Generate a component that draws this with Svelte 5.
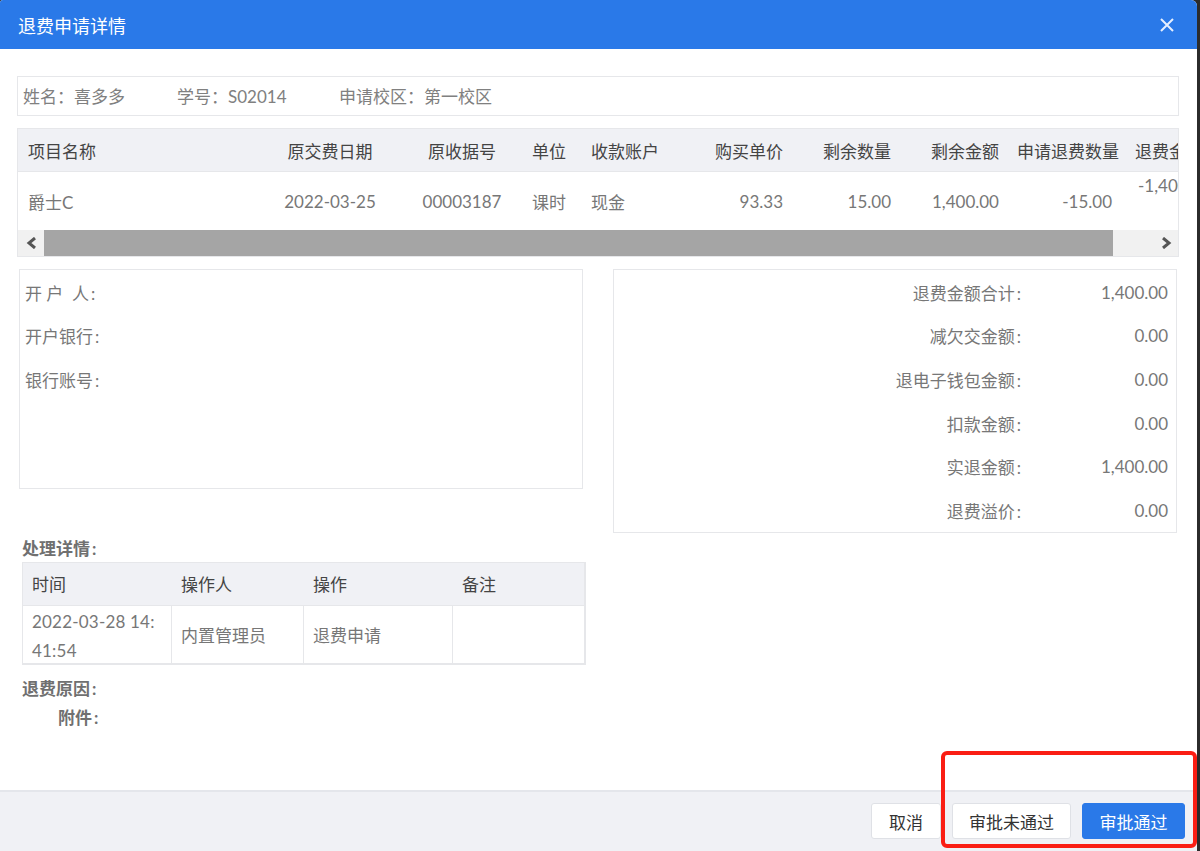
<script>
  const columns = [
    { key: 'name', label: '项目名称', width: 242, align: 'left' },
    { key: 'date', label: '原交费日期', width: 140, align: 'center' },
    { key: 'receipt', label: '原收据号', width: 124, align: 'center' },
    { key: 'unit', label: '单位', width: 59, align: 'left' },
    { key: 'account', label: '收款账户', width: 100, align: 'left' },
    { key: 'price', label: '购买单价', width: 108, align: 'right' },
    { key: 'qty', label: '剩余数量', width: 108, align: 'right' },
    { key: 'amount', label: '剩余金额', width: 108, align: 'right' },
    { key: 'refundQty', label: '申请退费数量', width: 120, align: 'right' },
    { key: 'refund', label: '退费金额', width: 120, align: 'left' }
  ];

  const row = {
    name: '爵士C',
    date: '2022-03-25',
    receipt: '00003187',
    unit: '课时',
    account: '现金',
    price: '93.33',
    qty: '15.00',
    amount: '1,400.00',
    refundQty: '-15.00',
    refund: '-1,400.00'
  };

  const bankFields = ['开 户  人', '开户银行', '银行账号'];

  const totals = [
    ['退费金额合计', '1,400.00'],
    ['减欠交金额', '0.00'],
    ['退电子钱包金额', '0.00'],
    ['扣款金额', '0.00'],
    ['实退金额', '1,400.00'],
    ['退费溢价', '0.00']
  ];

  const logHead = [
    { label: '时间', width: 149 },
    { label: '操作人', width: 132 },
    { label: '操作', width: 149 },
    { label: '备注', width: 132 }
  ];
</script>

<div class="dialog">
  <header class="title-bar">
    <span>退费申请详情</span>
    <svg class="close" width="14" height="14" viewBox="0 0 14 14" aria-hidden="true">
      <path d="M1 1 L13 13 M13 1 L1 13" stroke="#e6efff" stroke-width="2" fill="none" />
    </svg>
  </header>

  <main class="content">
    <div class="student">
      <span class="s-name">姓名：喜多多</span>
      <span class="s-no">学号：S02014</span>
      <span>申请校区：第一校区</span>
    </div>

    <div class="grid">
      <div class="grid-clip">
        <div class="grid-row head">
          {#each columns as col}
            <div class="cell {col.align}" style="width: {col.width}px">{col.label}</div>
          {/each}
        </div>
        <div class="grid-row body">
          {#each columns as col}
            <div
              class="cell {col.align}"
              class:raised={col.key === 'refund'}
              class:indent={col.key === 'refundQty'}
              style="width: {col.width}px"
            >{row[col.key]}</div>
          {/each}
        </div>
      </div>
      <div class="scrollbar">
        <div class="arrow">
          <svg width="11" height="12" viewBox="0 0 11 12"><path d="M9 1 L3 6 L9 11" stroke="#555" stroke-width="3" fill="none" /></svg>
        </div>
        <div class="thumb"></div>
        <div class="arrow end">
          <svg width="11" height="12" viewBox="0 0 11 12"><path d="M2 1 L8 6 L2 11" stroke="#555" stroke-width="3" fill="none" /></svg>
        </div>
      </div>
    </div>

    <div class="columns">
      <div class="left-col">
        <div class="bank">
          {#each bankFields as field}
            <div class="bank-row"><span>{field}<span class="colon">:</span></span></div>
          {/each}
        </div>

        <div class="section-label">处理详情<span class="colon">:</span></div>
        <div class="log">
          <div class="log-row log-head">
            {#each logHead as h}
              <div class="log-cell" style="width: {h.width}px">{h.label}</div>
            {/each}
          </div>
          <div class="log-row log-body">
            <div class="log-cell stamp" style="width: 148px">2022-03-28 14:<br />41:54</div>
            <div class="log-cell" style="width: 132px">内置管理员</div>
            <div class="log-cell" style="width: 149px">退费申请</div>
            <div class="log-cell" style="width: 132px"></div>
          </div>
        </div>

        <div class="section-label reason">退费原因<span class="colon">:</span></div>
        <div class="section-label attach">附件<span class="colon">:</span></div>
      </div>

      <div class="totals">
        {#each totals as [label, value]}
          <div class="total-row">
            <span>{label}<span class="colon">:</span></span>
            <span class="total-value">{value}</span>
          </div>
        {/each}
      </div>
    </div>
  </main>

  <footer class="actions">
    <button class="cancel">取消</button>
    <button class="reject">审批未通过</button>
    <button class="primary">审批通过</button>
  </footer>

  <div class="highlight"></div>
</div>

<style>
  :global(*, *::before, *::after) { box-sizing: border-box; }

  :global(body) {
    background: #2b2b2b;
    font-family: "Lato", "Noto Sans CJK SC", sans-serif;
    font-size: 17px;
    color: #777;
  }

  .dialog {
    position: relative;
    width: 1197px;
    height: 851px;
    background: #fff;
    border-radius: 3px 6px 0 0;
    display: flex;
    flex-direction: column;
    overflow: hidden;
  }

  .title-bar {
    flex: none;
    height: 49px;
    background: #2a79e8;
    color: #fff;
    font-size: 18px;
    padding: 0 23px 0 18px;
    display: flex;
    align-items: center;
    justify-content: space-between;
  }

  .content {
    flex: 1;
    padding: 27px 18px 0 17px;
    min-height: 0;
  }

  .student {
    height: 40px;
    border: 1px solid #e6e7ea;
    display: flex;
    align-items: center;
    padding: 0 0 1px 5px;
    color: #808080;
  }

  .s-name { width: 154px; }
  .s-no { width: 162px; }

  .grid {
    margin-top: 12px;
    height: 129px;
    border: 1px solid #e6e7ea;
    display: flex;
    flex-direction: column;
  }

  .grid-clip { flex: 1; overflow: hidden; min-height: 0; }

  .grid-row { display: flex; width: max-content; }

  .head {
    height: 43px;
    background: #f0f1f5;
    border-bottom: 1px solid #e6e7ea;
    color: #444;
  }

  .body { height: 58px; color: #777; }

  .cell {
    flex: none;
    padding: 0 8px;
    display: flex;
    align-items: center;
    white-space: nowrap;
  }

  .cell:first-child { padding-left: 10px; }
  .cell.center { justify-content: center; }
  .cell.right { justify-content: flex-end; }
  .cell.indent { padding-right: 15px; }
  .cell.raised { align-items: flex-start; padding-top: 3px; padding-left: 11px; }

  .scrollbar {
    flex: none;
    height: 26px;
    background: #f1f1f1;
    display: flex;
  }

  .arrow {
    width: 26px;
    display: flex;
    align-items: center;
    justify-content: center;
  }

  .arrow.end { width: 65px; padding-left: 41px; }

  .thumb { flex: 1; background: #a5a5a5; }

  .columns {
    margin-top: 12px;
    margin-right: 2px;
    display: flex;
    justify-content: space-between;
    align-items: flex-start;
  }

  .left-col { width: 569px; }

  .bank {
    width: 564px;
    height: 220px;
    margin-left: 2px;
    border: 1px solid #e6e7ea;
    padding: 0.5px 5px 0;
  }

  .bank-row {
    height: 43.5px;
    display: flex;
    align-items: center;
    white-space: pre;
  }

  /* the trailing colon sits a little wider than the text font's own */
  .colon { margin-left: 2px; }

  .section-label {
    font-weight: 700;
    color: #707070;
    line-height: 22px;
    padding-left: 5px;
  }

  .bank + .section-label { margin-top: 49px; }

  .log {
    margin: 2px 0 0 5px;
    width: 564px;
    border: 1px solid #e6e7ea;
    border-bottom-width: 2px;
    border-right-width: 2px;
  }

  .log-row { display: flex; }

  .log-head {
    height: 42px;
    background: #f0f1f5;
    color: #444;
  }

  .log-body { height: 58px; color: #777; border-top: 1px solid #e6e7ea; }

  .log-cell {
    flex: none;
    padding: 1px 9px 0;
    display: flex;
    align-items: center;
    line-height: 29px;
  }

  .log-body .stamp { display: block; letter-spacing: 0.2px; }
  .log-body .log-cell + .log-cell { border-left: 1px solid #e6e7ea; }

  .reason { margin-top: 13px; }
  .attach { margin-top: 7px; padding-left: 41px; }

  .totals {
    width: 564px;
    height: 264px;
    border: 1px solid #e6e7ea;
    padding: 0.5px 8px 0 0;
  }

  .total-row {
    height: 43.6px;
    display: flex;
    align-items: center;
    justify-content: flex-end;
  }

  .total-value { width: 147px; text-align: right; }

  .actions {
    flex: none;
    height: 61px;
    background: #f0f1f5;
    border-top: 2px solid #e4e6eb;
    display: flex;
    justify-content: flex-end;
    align-items: flex-start;
    gap: 11px;
    padding: 11px 12px 0 0;
  }

  button {
    height: 36px;
    padding: 0;
    background: #fff;
    border: 1px solid #dfe1e6;
    border-radius: 3px;
    font: inherit;
    color: #333;
  }

  .cancel { width: 70px; }
  .reject { width: 119px; }

  button.primary {
    width: 103px;
    background: #2a79e8;
    border-color: #2a79e8;
    color: #fff;
  }

  .highlight {
    position: absolute;
    left: 941px;
    top: 751px;
    width: 256px;
    height: 97px;
    border: 4px solid #fa1e14;
    border-radius: 6px;
    pointer-events: none;
  }
</style>
